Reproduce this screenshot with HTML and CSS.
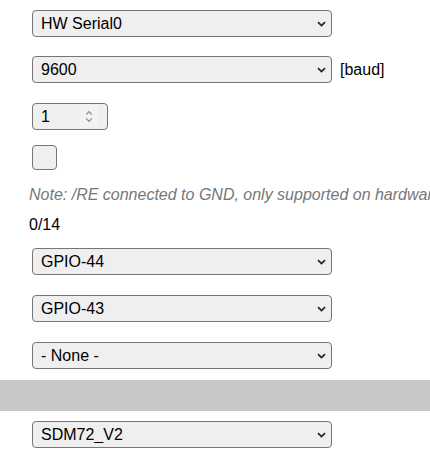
FILE: index.html
```html
<!DOCTYPE html>
<html>
<head>
<meta charset="utf-8">
<link rel="stylesheet" href="styles.css">
</head>
<body>
<div class="page">
  <div class="field f1">
    <div class="sel">
      <select><option>HW Serial0</option></select>
      <svg class="chev" width="9" height="6" viewBox="0 0 9 6"><path d="M1 1.2 L4.5 4.6 L8 1.2" fill="none" stroke="#222" stroke-width="1.7"/></svg>
    </div>
  </div>
  <div class="field f2">
    <div class="sel">
      <select><option>9600</option></select>
      <svg class="chev" width="9" height="6" viewBox="0 0 9 6"><path d="M1 1.2 L4.5 4.6 L8 1.2" fill="none" stroke="#222" stroke-width="1.7"/></svg>
    </div>
    <span class="unit">[baud]</span>
  </div>
  <div class="field f3">
    <div class="num">
      <span class="numval">1</span>
      <span class="spin">
        <svg width="8" height="13" viewBox="0 0 8 13"><path d="M1.2 4.6 L4 1.6 L6.8 4.6 M1.2 8.4 L4 11.4 L6.8 8.4" fill="none" stroke="#8a8a8a" stroke-width="1.2"/></svg>
      </span>
    </div>
  </div>
  <div class="field f4">
    <input type="checkbox" class="cb">
  </div>
  <p class="note">Note: /RE connected to GND, only supported on hardware serial</p>
  <p class="count">0/14</p>
  <div class="field f5">
    <div class="sel">
      <select><option>GPIO-44</option></select>
      <svg class="chev" width="9" height="6" viewBox="0 0 9 6"><path d="M1 1.2 L4.5 4.6 L8 1.2" fill="none" stroke="#222" stroke-width="1.7"/></svg>
    </div>
  </div>
  <div class="field f6">
    <div class="sel">
      <select><option>GPIO-43</option></select>
      <svg class="chev" width="9" height="6" viewBox="0 0 9 6"><path d="M1 1.2 L4.5 4.6 L8 1.2" fill="none" stroke="#222" stroke-width="1.7"/></svg>
    </div>
  </div>
  <div class="field f7">
    <div class="sel">
      <select><option>- None -</option></select>
      <svg class="chev" width="9" height="6" viewBox="0 0 9 6"><path d="M1 1.2 L4.5 4.6 L8 1.2" fill="none" stroke="#222" stroke-width="1.7"/></svg>
    </div>
  </div>
  <div class="bar"></div>
  <div class="field f8">
    <div class="sel">
      <select><option>SDM72_V2</option></select>
      <svg class="chev" width="9" height="6" viewBox="0 0 9 6"><path d="M1 1.2 L4.5 4.6 L8 1.2" fill="none" stroke="#222" stroke-width="1.7"/></svg>
    </div>
  </div>
</div>
</body>
</html>
```

FILE: styles.css
```css
html, body {
  margin: 0;
  padding: 0;
  background: #fff;
}
body {
  font-family: "Liberation Sans", Arial, sans-serif;
  font-size: 16px;
  color: #000;
  overflow: hidden;
}
.page {
  display: flex;
  flex-direction: column;
  width: 430px;
  overflow: hidden;
}
.field {
  display: flex;
  align-items: center;
  padding-left: 32px;
}
.f1 { margin-top: 10px; }
.f2 { margin-top: 19px; }
.f3 { margin-top: 20px; }
.f4 { margin-top: 15px; }
.f5 { margin-top: 14px; }
.f6 { margin-top: 20px; }
.f7 { margin-top: 20px; }
.f8 { margin-top: 10px; }
.sel {
  position: relative;
  width: 300px;
  height: 27px;
}
.sel select {
  appearance: none;
  -webkit-appearance: none;
  box-sizing: border-box;
  width: 100%;
  height: 100%;
  margin: 0;
  padding: 0 0 0 8px;
  border: 1px solid #767676;
  border-radius: 4px;
  background: #efefef;
  font-family: "Liberation Sans", Arial, sans-serif;
  font-size: 16px;
  color: #000;
}
.chev {
  position: absolute;
  right: 6px;
  top: 10.5px;
  pointer-events: none;
}
.unit {
  margin-left: 8px;
  white-space: nowrap;
}
.num {
  box-sizing: border-box;
  width: 76px;
  height: 27px;
  border: 1px solid #767676;
  border-radius: 4px;
  background: #efefef;
  display: flex;
  align-items: center;
  padding-left: 8px;
}
.numval {
  flex: 1;
}
.spin {
  display: flex;
  align-items: center;
  justify-content: center;
  width: 18px;
  height: 23px;
  margin-right: 9px;
  background: #f3f3f3;
}
.spin svg {
  display: block;
}
.cb {
  appearance: none;
  -webkit-appearance: none;
  box-sizing: border-box;
  width: 25px;
  height: 25px;
  margin: 0;
  border: 1px solid #767676;
  border-radius: 4px;
  background: #efefef;
}
.note {
  margin: 16px 0 0 29px;
  line-height: 18px;
  font-style: italic;
  color: #777;
  white-space: nowrap;
  overflow: hidden;
}
.count {
  margin: 12px 0 0 29px;
  line-height: 18px;
}
.bar {
  margin-top: 11px;
  height: 31px;
  background: #c8c8c8;
}
```
